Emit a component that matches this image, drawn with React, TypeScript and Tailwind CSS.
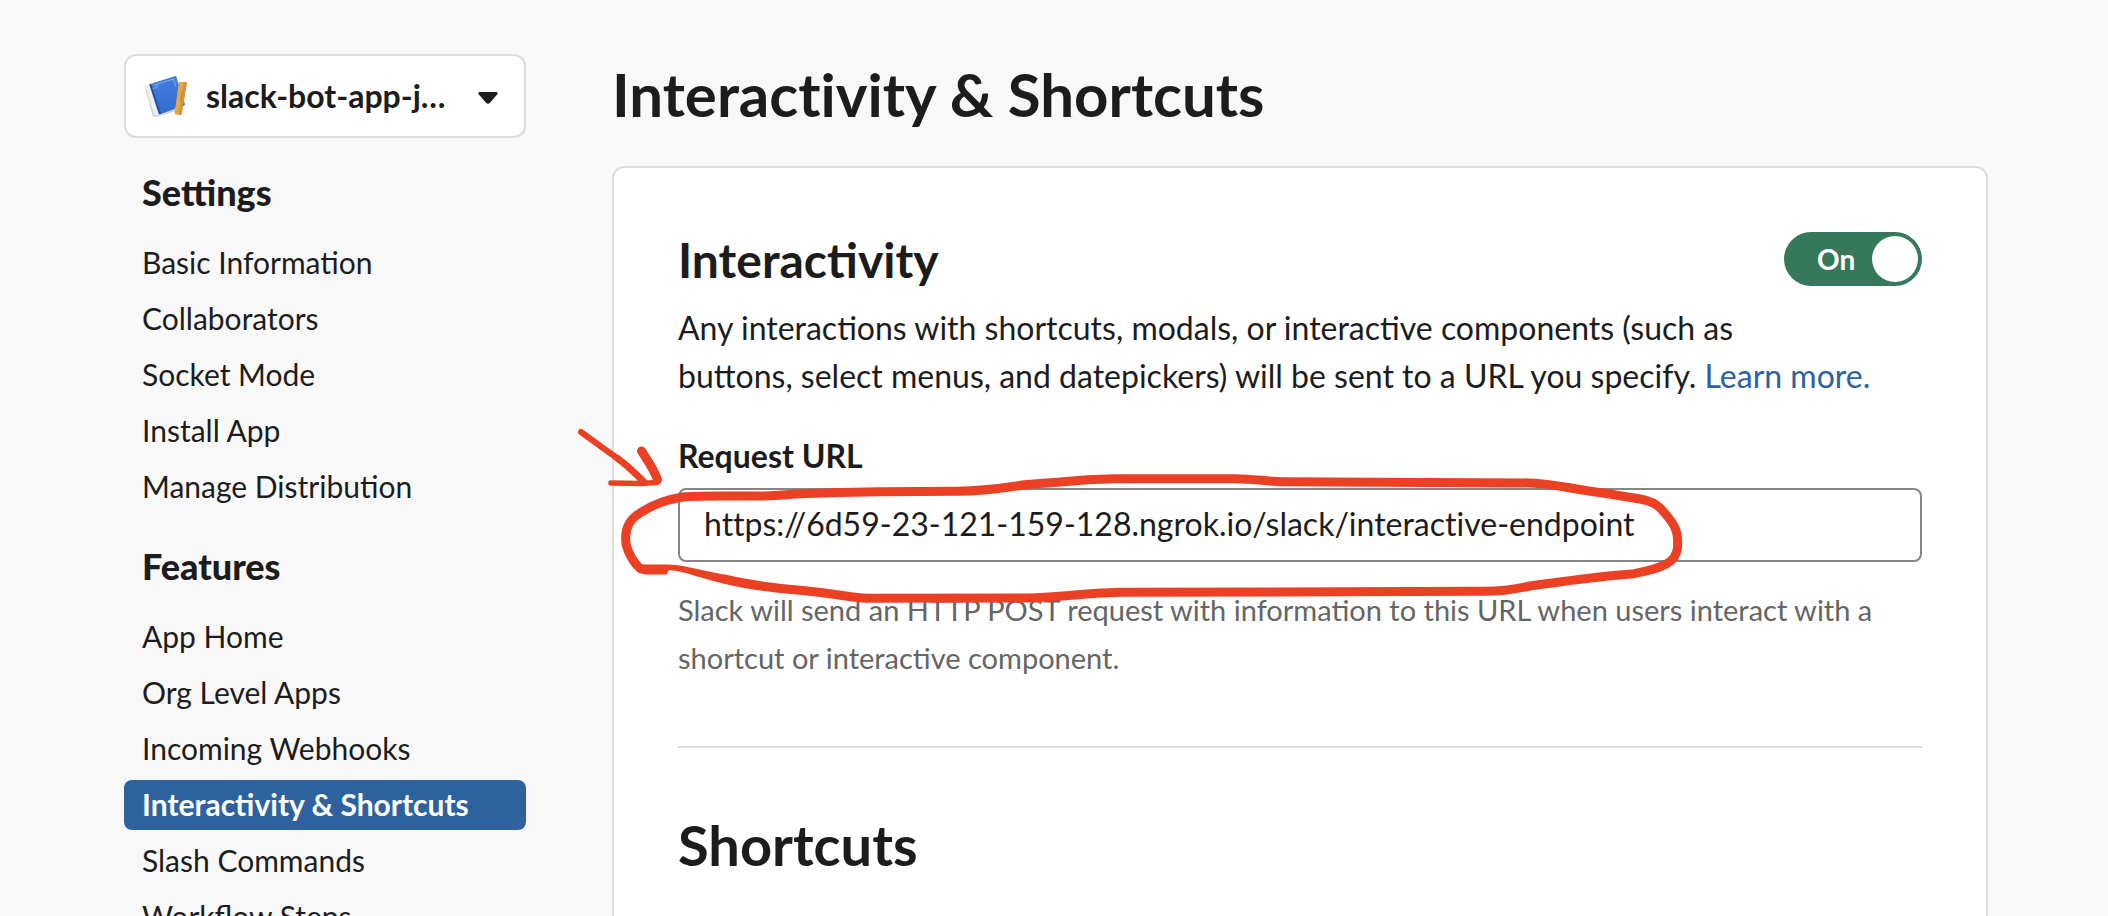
import React from "react";

type NavGroup = { title: string; items: string[] };

const groups: NavGroup[] = [
  {
    title: "Settings",
    items: ["Basic Information", "Collaborators", "Socket Mode", "Install App", "Manage Distribution"],
  },
  {
    title: "Features",
    items: [
      "App Home",
      "Org Level Apps",
      "Incoming Webhooks",
      "Interactivity & Shortcuts",
      "Slash Commands",
      "Workflow Steps",
    ],
  },
];

const activeItem = "Interactivity & Shortcuts";

function AppIcon() {
  return (
    <svg viewBox="6 6 144 144" className="size-12 shrink-0" aria-hidden="true">
      <defs>
        <linearGradient id="cover" x1="0" y1="0" x2="0" y2="1">
          <stop offset="0" stopColor="#4482dd" />
          <stop offset="1" stopColor="#2f6bd0" />
        </linearGradient>
      </defs>
      <path d="M14 49 L27 44 L58 132 L124 112 L128 118 L45 142 L38 138 Z" fill="#d2d2d2" />
      <path d="M16 49 L27 45 L57 133 L44 138 Z" fill="#efefef" />
      <path d="M28 43 L106 18 Q108 18 109 20 L135 103 Q135 106 132 107 L60 133 L56 132 Z" fill="url(#cover)" />
      <path d="M28 43 L33 42 L63 131 L58 133 Z" fill="#1d4f9f" />
      <path d="M40 46 L100 27 L108 50 M38 56 L52 52 L50 44" fill="none" stroke="#9cc0f2" strokeWidth="2" />
      <path d="M117 35 L141 37 L124 136 L103 132 Z" fill="#dfa746" />
      <path d="M131 37 L141 37 L124 136 L116 134 Z" fill="#d1963a" />
      <path d="M127 62 L122 94" fill="none" stroke="#a9752a" strokeWidth="2" />
    </svg>
  );
}

function AppPicker() {
  return (
    <button
      type="button"
      className="flex h-[84px] w-full items-center rounded-xl border-2 border-[#dddddd] bg-white pl-4 pr-[26px] text-left"
    >
      <AppIcon />
      <span className="ml-4 whitespace-nowrap text-[32px] font-bold leading-10">slack-bot-app-j…</span>
      <svg viewBox="0 0 20 12" className="ml-auto mt-1 h-3 w-5 shrink-0" aria-hidden="true">
        <path d="M1.500 0 H18.500 Q20.500 0.400 19.300 2.200 L12 10.800 Q10 12.800 8 10.800 L0.700 2.200 Q-0.500 0.400 1.500 0 Z" fill="#1d1c1d" />
      </svg>
    </button>
  );
}

function Sidebar() {
  return (
    <aside className="w-[402px] shrink-0">
      <AppPicker />
      <nav aria-label="App configuration">
        {groups.map((group) => (
          <section key={group.title} className="pt-8">
            <h2 className="px-[18px] text-[36px] font-black leading-[44px]">{group.title}</h2>
            <ul className="mt-6 flex flex-col gap-[6px]">
              {group.items.map((item) => (
                <li key={item}>
                  <a
                    href="#"
                    aria-current={item === activeItem ? "page" : undefined}
                    className={
                      item === activeItem
                        ? "block h-[50px] rounded-lg bg-[#2d629e] px-[18px] text-[30px] font-bold leading-[48px] text-white"
                        : "block h-[50px] rounded-lg px-[18px] text-[30px] leading-[48px]"
                    }
                  >
                    {item}
                  </a>
                </li>
              ))}
            </ul>
          </section>
        ))}
      </nav>
    </aside>
  );
}

function Toggle() {
  const [on, setOn] = React.useState(true);
  return (
    <button
      type="button"
      role="switch"
      aria-checked={on}
      aria-label="Interactivity"
      onClick={() => setOn(!on)}
      className="flex h-[54px] w-[138px] shrink-0 items-center justify-between rounded-full bg-[#35785b] pl-[33px] pr-1 text-[28px] font-bold text-white"
    >
      <span>{on ? "On" : "Off"}</span>
      <span className="size-[46px] rounded-full bg-white" />
    </button>
  );
}

function Annotation() {
  return (
    <svg
      viewBox="570 420 1130 190"
      className="pointer-events-none absolute -left-[108px] -top-3 h-[190px] w-[1130px] max-w-none"
      fill="none"
      stroke="#ec4025"
      strokeLinecap="round"
      strokeLinejoin="round"
      aria-hidden="true"
    >
      <path d="M581 432 C596 443 606 450 617 458 C627 465 634 472 644 482" strokeWidth="6" />
      <path d="M617 458 C627 465 634 472 644 482" strokeWidth="7" />
      <path d="M641.500 451 C648 461 655 471 657.500 480" strokeWidth="9" />
      <path d="M657 482.500 L640 483.500 L611 483" strokeWidth="5.500" />
      <path
        d="M641 569 C634 564 626 550 625.700 540 C625 528 630 519 640 513 C652 505 669 499 683 497 C700 495 750 497 775 495.500 L800 493.700 C840 492.500 900 491.300 957 491.300 C990 491 1008 487 1027 484.500 L1060 482 C1080 480 1100 479 1115 478.700 H1235 C1255 478.700 1265 481.500 1282 481.700 L1530 482.900 C1555 483.500 1570 489 1605 493.300 L1640 499 C1656 502 1660 507 1668 517 C1678 529 1678 537 1677.500 548 C1676 562 1664 568 1634 573.700 C1600 576 1580 579 1530 586 C1510 590 1500 591.500 1480 591.300 L1120 592.300 C1080 593.500 1060 597 1027 598 L867 598.300 C850 597.500 840 594 800 590.300 C765 587.500 745 584 724 579"
        strokeWidth="9"
      />
      <path d="M636 566 L641 564.500 C660 564.500 677 563.500 690 567.500 L728 575.500 L726 584 C705 580 685 571 669 570 L666.500 574.500 H645 Q638 573 634 567 Z" fill="#ec4025" stroke="none" />
    </svg>
  );
}

export default function App() {
  return (
    <div className="h-screen overflow-hidden bg-[#f8f8f8] font-['Lato',sans-serif] text-[#1d1c1d]">
      <div className="flex gap-[86px] pl-[124px] pr-[120px] pt-[54px]">
        <Sidebar />
        <main className="min-w-0 flex-1">
          <h1 className="text-[60px] font-bold leading-[80px] [font-variant-ligatures:none]">Interactivity &amp; Shortcuts</h1>
          <div className="mt-8 min-h-[800px] rounded-xl border-2 border-[#dddddd] bg-white px-16 pt-16">
            <section>
              <div className="flex items-start justify-between">
                <h2 className="text-[48px] font-bold leading-[56px]">Interactivity</h2>
                <Toggle />
              </div>
              <p className="mt-4 text-[32px] leading-[48px]">
                Any interactions with shortcuts, modals, or interactive components (such as
                <br />
                buttons, select menus, and datepickers) will be sent to a URL you specify.{" "}
                <a href="#" className="text-[#2c629f]">
                  Learn more.
                </a>
              </p>
              <div className="relative mt-8">
                <label htmlFor="request-url" className="block text-[32px] font-bold leading-[48px]">
                  Request URL
                </label>
                <input
                  id="request-url"
                  type="text"
                  defaultValue="https://6d59-23-121-159-128.ngrok.io/slack/interactive-endpoint"
                  className="mt-2 block h-[74px] w-full rounded-lg border-2 border-[#868686] bg-white px-6 pb-1 text-[32px] [font-variant-ligatures:none]"
                />
                <p className="mt-6 text-[29px] leading-[48px] text-[#656565]">
                  Slack will send an HTTP POST request with information to this URL when users interact with a
                  <br />
                  shortcut or interactive component.
                </p>
                <Annotation />
              </div>
            </section>
            <hr className="mt-16 border-t-2 border-[#dddddd]" />
            <section className="pt-16">
              <h2 className="text-[56px] font-bold leading-[66px]">Shortcuts</h2>
            </section>
          </div>
        </main>
      </div>
    </div>
  );
}
